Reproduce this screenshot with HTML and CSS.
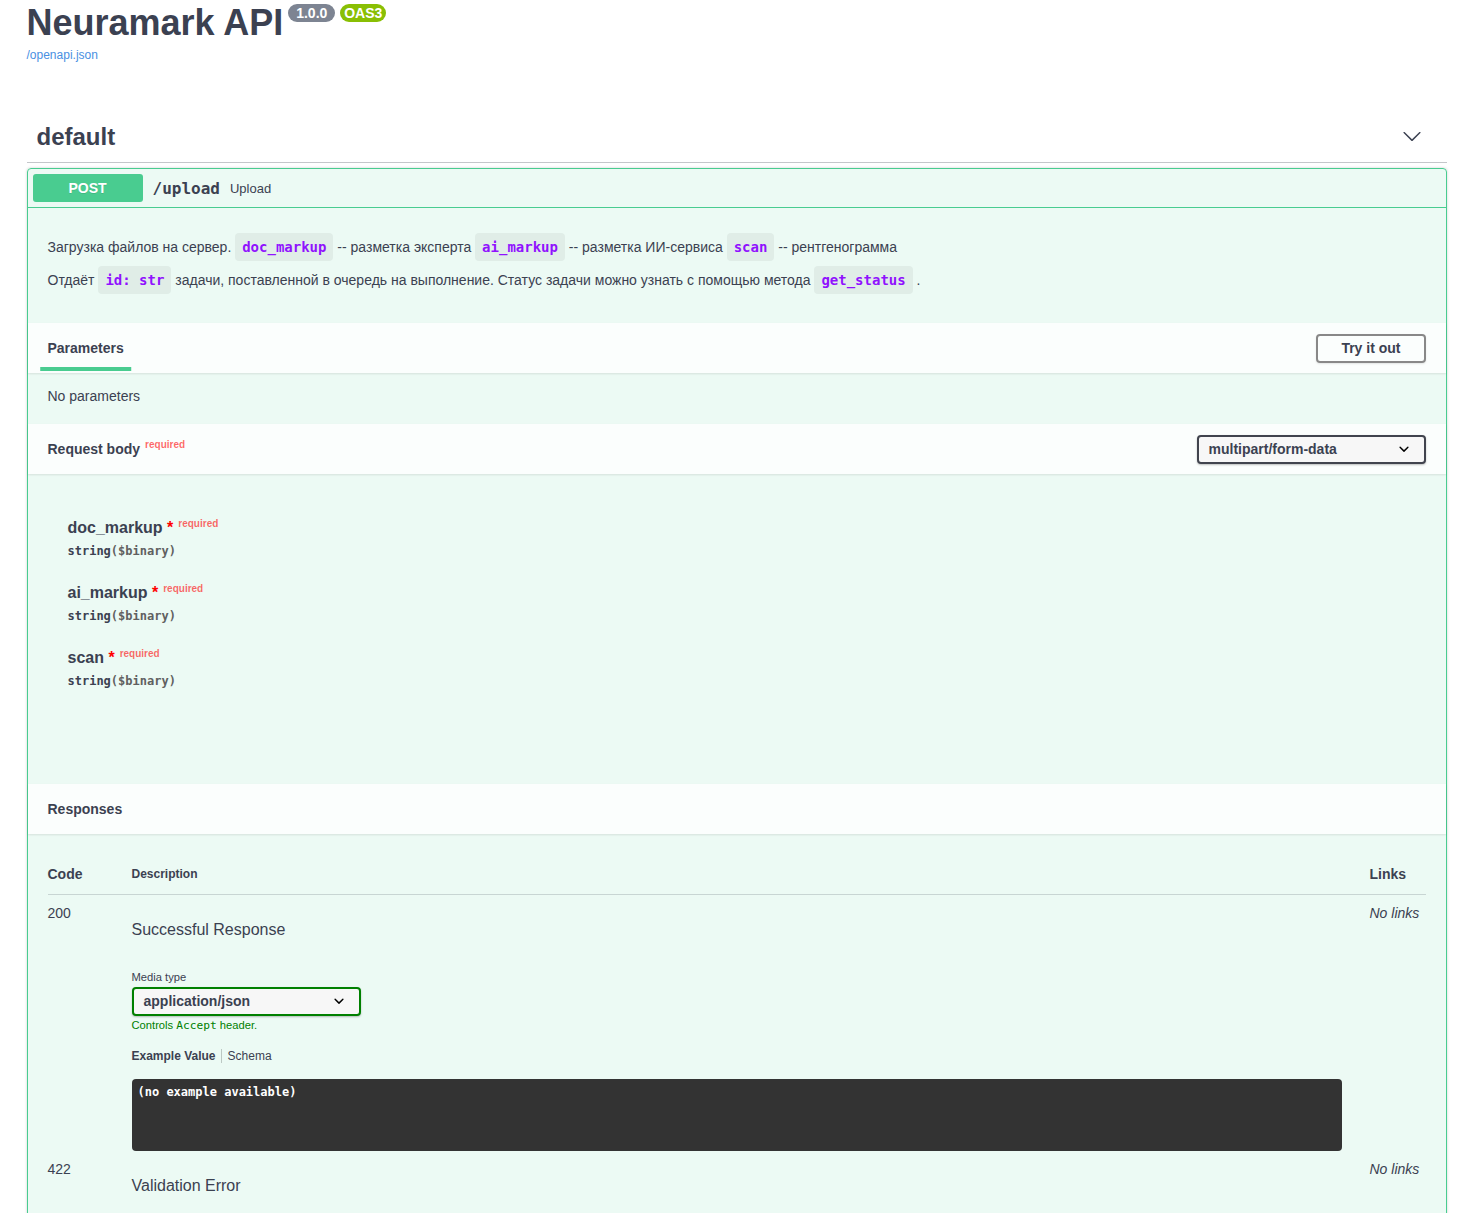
FILE: index.html
```html
<!DOCTYPE html>
<html lang="ru">
<head>
<meta charset="utf-8">
<title>Neuramark API</title>
<link rel="stylesheet" href="styles.css">
</head>
<body>
<div class="wrapper">
  <section class="info">
    <h2 class="title"><span class="title-text">Neuramark API</span><span class="badge badge-version"> 1.0.0 </span><span class="badge badge-oas">OAS3</span></h2>
    <a class="spec-link" href="#">/openapi.json</a>
  </section>

  <div class="tag">
    <h3 class="tag-name">default</h3>
    <svg class="tag-arrow" width="20" height="20" viewBox="0 0 20 20" aria-hidden="true"><path d="M17.418 6.109c.272-.268.709-.268.979 0s.271.701 0 .969l-7.908 7.83c-.27.268-.707.268-.979 0l-7.908-7.830c-.27-.268-.27-.701 0-.969.271-.268.709-.268.979 0L10 13.25l7.418-7.141z" fill="#3b4151"/></svg>
  </div>

  <div class="opblock">
    <div class="summary">
      <span class="method">POST</span>
      <span class="path">/upload</span>
      <span class="summary-desc">Upload</span>
    </div>

    <div class="description">
      <p>Загрузка файлов на сервер. <code>doc_markup</code> -- разметка эксперта <code>ai_markup</code> -- разметка ИИ-сервиса <code>scan</code> -- рентгенограмма</p>
      <p>Отдаёт <code>id: str</code> задачи, поставленной в очередь на выполнение. Статус задачи можно узнать с помощью метода <code>get_status</code> .</p>
    </div>

    <div class="section-header">
      <h4 class="section-title tab-title"><span class="tab-active">Parameters</span></h4>
      <button class="btn" type="button">Try it out</button>
    </div>
    <div class="no-params">No parameters</div>

    <div class="section-header">
      <h4 class="section-title">Request body<span class="req-small">required</span></h4>
      <div class="select select-dark">
        <span>multipart/form-data</span>
        <svg class="select-arrow" width="20" height="20" viewBox="0 0 20 20" aria-hidden="true"><path d="M13.418 7.859a.695.695 0 01.978 0 .68.68 0 010 .969l-3.908 3.83a.697.697 0 01-.979 0l-3.908-3.83a.68.68 0 010-.969.695.695 0 01.978 0L10 11l3.418-3.141z" fill="#000"/></svg>
      </div>
    </div>
    <div class="body-fields">
      <div class="field">
        <div class="field-name">doc_markup<span class="star">&nbsp;*</span><span class="req">required</span></div>
        <div class="field-type">string<span class="fmt">($binary)</span></div>
      </div>
      <div class="field">
        <div class="field-name">ai_markup<span class="star">&nbsp;*</span><span class="req">required</span></div>
        <div class="field-type">string<span class="fmt">($binary)</span></div>
      </div>
      <div class="field">
        <div class="field-name">scan<span class="star">&nbsp;*</span><span class="req">required</span></div>
        <div class="field-type">string<span class="fmt">($binary)</span></div>
      </div>
    </div>

    <div class="section-header">
      <h4 class="section-title">Responses</h4>
    </div>
    <div class="responses">
      <div class="resp-head">
        <div class="head-code">Code</div>
        <div class="head-desc">Description</div>
        <div class="head-links">Links</div>
      </div>

      <div class="resp-row">
        <div class="cell-code">200</div>
        <div class="cell-desc">
          <p class="resp-text">Successful Response</p>
          <span class="media-label">Media type</span>
          <div class="select select-green">
            <span>application/json</span>
            <svg class="select-arrow" width="20" height="20" viewBox="0 0 20 20" aria-hidden="true"><path d="M13.418 7.859a.695.695 0 01.978 0 .68.68 0 010 .969l-3.908 3.83a.697.697 0 01-.979 0l-3.908-3.83a.68.68 0 010-.969.695.695 0 01.978 0L10 11l3.418-3.141z" fill="#000"/></svg>
          </div>
          <div class="accept-msg">Controls <code>Accept</code> header.</div>
          <ul class="tabs">
            <li class="tab-first">Example Value</li>
            <li>Schema</li>
          </ul>
          <pre class="example">(no example available)</pre>
        </div>
        <div class="cell-links">No links</div>
      </div>

      <div class="resp-row">
        <div class="cell-code">422</div>
        <div class="cell-desc">
          <p class="resp-text">Validation Error</p>
          <span class="media-label">Media type</span>
          <div class="select select-dark">
            <span>application/json</span>
            <svg class="select-arrow" width="20" height="20" viewBox="0 0 20 20" aria-hidden="true"><path d="M13.418 7.859a.695.695 0 01.978 0 .68.68 0 010 .969l-3.908 3.83a.697.697 0 01-.979 0l-3.908-3.83a.68.68 0 010-.969.695.695 0 01.978 0L10 11l3.418-3.141z" fill="#000"/></svg>
          </div>
          <ul class="tabs">
            <li class="tab-first">Example Value</li>
            <li>Schema</li>
          </ul>
          <pre class="example">{
  "detail": [
    {
      "loc": [
        "string",
        0
      ],
      "msg": "string",
      "type": "string"
    }
  ]
}</pre>
        </div>
        <div class="cell-links">No links</div>
      </div>
    </div>
  </div>
</div>
</body>
</html>
```

FILE: styles.css
```css
* {
  box-sizing: border-box;
}

html,
body {
  margin: 0;
  padding: 0;
  background: #fff;
}

body {
  font-family: "Liberation Sans", Arial, sans-serif;
  color: #3b4151;
}

.wrapper {
  max-width: 1460px;
  margin: 0 auto;
  padding: 0 20px;
}

/* ---------- info ---------- */
.info {
  margin: 0 0 50px;
}

.title {
  display: flex;
  align-items: flex-start;
  margin: 0;
  font-size: 36px;
  font-weight: 700;
  line-height: 46px;
  color: #3b4151;
}

.badge {
  margin: 4px 0 0 5px;
  padding: 1px 4px;
  border-radius: 57px;
  font-size: 14px;
  font-weight: 700;
  line-height: 16px;
  color: #fff;
  white-space: pre;
}

.badge-version {
  background: #7d8492;
}

.badge-oas {
  background: #89bf04;
}

.spec-link {
  display: block;
  margin-top: 2px;
  font-size: 12px;
  line-height: 14px;
  color: #4990e2;
  text-decoration: none;
}

/* ---------- tag ---------- */
.tag {
  display: flex;
  align-items: center;
  justify-content: space-between;
  padding: 10px 25px 10px 10px;
  border-bottom: 1px solid rgba(59, 65, 81, 0.3);
  margin-bottom: 5px;
}

.tag-name {
  margin: 0;
  font-size: 24px;
  font-weight: 700;
  line-height: 30px;
}

.tag-arrow {
  display: block;
  margin-top: -2px;
}

/* ---------- opblock ---------- */
.opblock {
  border: 1px solid #49cc90;
  border-radius: 4px;
  background: rgba(73, 204, 144, 0.1);
  box-shadow: 0 0 3px rgba(0, 0, 0, 0.19);
  margin-bottom: 15px;
}

.summary {
  display: flex;
  align-items: center;
  padding: 5px;
  border-bottom: 1px solid #49cc90;
}

.method {
  width: 110px;
  padding: 6px 0;
  text-align: center;
  font-size: 14px;
  font-weight: 700;
  line-height: 16px;
  color: #fff;
  background: #49cc90;
  border-radius: 3px;
  text-shadow: 0 1px 0 rgba(0, 0, 0, 0.1);
}

.path {
  padding: 0 10px;
  font-family: "DejaVu Sans Mono", monospace;
  font-size: 16px;
  font-weight: 700;
}

.summary-desc {
  font-size: 13px;
}

.description {
  padding: 16px 20px 19px;
  font-size: 14px;
}

.description p {
  margin: 14px 0;
  line-height: 19px;
}

.description code {
  font-family: "DejaVu Sans Mono", monospace;
  font-size: 14px;
  font-weight: 700;
  color: #9012fe;
  background: rgba(0, 0, 0, 0.05);
  padding: 6px 7px;
  border-radius: 4px;
}

/* ---------- section headers ---------- */
.section-header {
  display: flex;
  align-items: center;
  justify-content: space-between;
  min-height: 50px;
  padding: 8px 20px;
  background: rgba(255, 255, 255, 0.8);
  box-shadow: 0 1px 2px rgba(0, 0, 0, 0.1);
}

.section-title {
  margin: 0;
  font-size: 14px;
  font-weight: 700;
  line-height: 16px;
}

.tab-active {
  position: relative;
  display: inline-block;
}

.tab-active::after {
  content: "";
  position: absolute;
  left: 50%;
  bottom: -15px;
  width: 120%;
  height: 4px;
  transform: translateX(-50%);
  background: #49cc90;
}

.req-small {
  position: relative;
  top: -6px;
  margin-left: 5px;
  font-size: 10px;
  line-height: 1;
  color: rgba(255, 0, 0, 0.6);
}

.btn {
  padding: 5px 23px;
  font-family: "Liberation Sans", Arial, sans-serif;
  font-size: 14px;
  font-weight: 700;
  line-height: 15px;
  color: #3b4151;
  background: transparent;
  border: 2px solid #888;
  border-radius: 4px;
  box-shadow: 0 1px 2px rgba(0, 0, 0, 0.1);
}

.select {
  display: flex;
  align-items: center;
  justify-content: space-between;
  width: 229px;
  padding: 5px 10px;
  font-size: 14px;
  font-weight: 700;
  line-height: 15px;
  color: #3b4151;
  background: #f7f7f7;
  border: 2px solid #41444e;
  border-radius: 4px;
  box-shadow: 0 1px 2px 0 rgba(0, 0, 0, 0.25);
}

.select-green {
  border-color: #008000;
}

.select-arrow {
  display: block;
  margin: -3px 0 -2px;
}

.no-params {
  padding: 15px 20px 20px;
  font-size: 14px;
  line-height: 16px;
}

/* ---------- request body ---------- */
.body-fields {
  padding: 34px 40px 81px;
}

.field {
  padding: 10px 0;
}

.field-name {
  font-size: 16px;
  font-weight: 700;
  line-height: 20px;
  height: 20px;
}

.star {
  color: red;
  line-height: 1;
}

.req {
  position: relative;
  top: -6px;
  padding: 5px;
  font-size: 10px;
  line-height: 1;
  color: rgba(255, 0, 0, 0.6);
}

.field-type {
  padding: 6px 0 4px;
  font-family: "DejaVu Sans Mono", monospace;
  font-size: 12px;
  font-weight: 700;
  line-height: 15px;
  height: 25px;
}

.fmt {
  color: #606060;
}

/* ---------- responses ---------- */
.responses {
  padding: 20px;
}

.resp-head,
.resp-row {
  display: grid;
  grid-template-columns: 84px 1fr 56px;
}

.resp-head {
  align-items: center;
  padding: 12px 0;
  border-bottom: 1px solid rgba(59, 65, 81, 0.2);
  line-height: 16px;
}

.head-code,
.head-links {
  font-size: 14px;
  font-weight: 700;
}

.head-desc {
  font-size: 12px;
  font-weight: 700;
}

.resp-row {
  padding-top: 10px;
  font-size: 14px;
  line-height: 16px;
}

.cell-links {
  font-style: italic;
}

.resp-text {
  margin: 16px 0 0;
  font-size: 16px;
  line-height: 18px;
}

.media-label {
  display: block;
  margin: 32px 0 3px;
  font-size: 11.2px;
  line-height: 13px;
}

.accept-msg {
  margin-top: 3px;
  font-size: 11.2px;
  line-height: 13px;
  color: #008000;
}

.accept-msg code {
  font-family: "DejaVu Sans Mono", monospace;
  font-size: 11.2px;
}

.tabs {
  display: flex;
  margin: 17px 0 0;
  padding: 0;
  list-style: none;
  font-size: 12px;
  line-height: 14px;
}

.tab-first {
  position: relative;
  padding-right: 12px;
  font-weight: 700;
}

.tab-first::after {
  content: "";
  position: absolute;
  top: 0;
  right: 6px;
  width: 1px;
  height: 100%;
  background: rgba(0, 0, 0, 0.2);
}

.example {
  margin: 16px 28px 0 0;
  min-height: 72px;
  padding: 6px;
  background: #333;
  border-radius: 4px;
  color: #fff;
  font-family: "DejaVu Sans Mono", monospace;
  font-size: 12px;
  font-weight: 700;
  line-height: 15px;
  white-space: pre;
}
```
